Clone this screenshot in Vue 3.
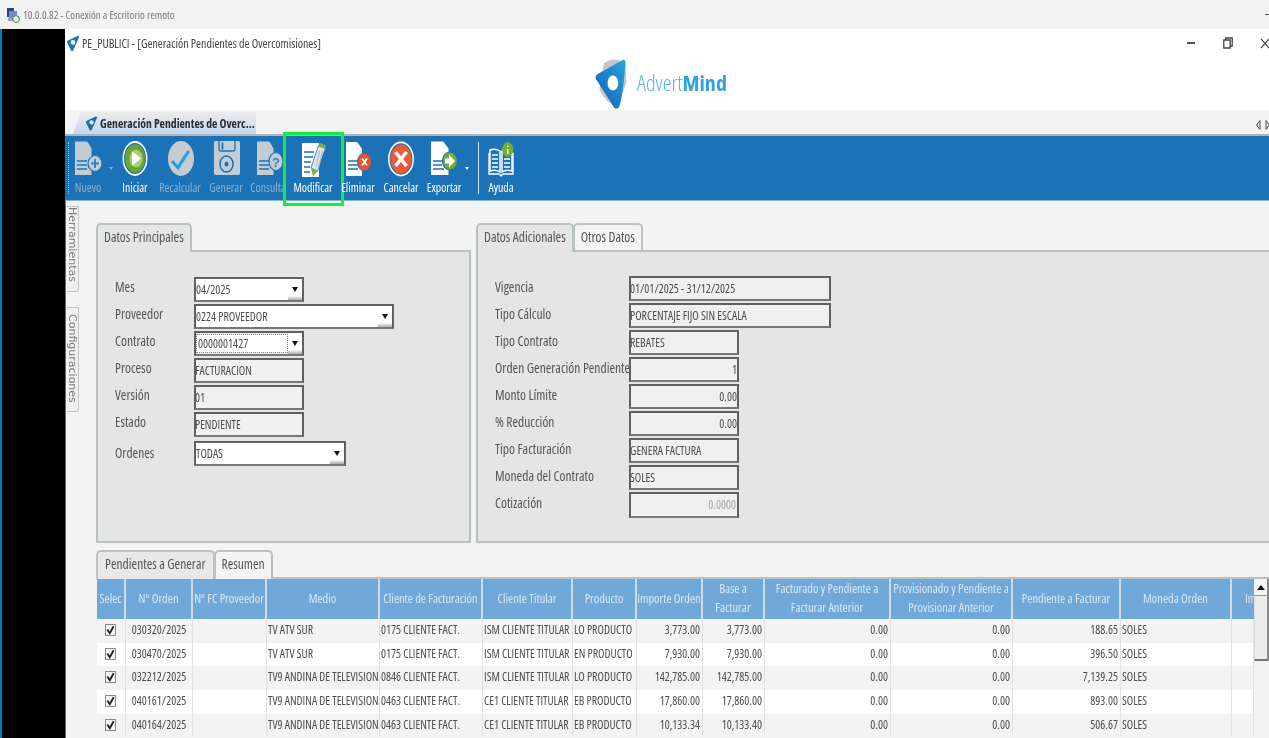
<script setup>
const tools = [
  { id: 'nuevo', label: 'Nuevo', off: true, gap: 0, caret: true },
  { id: 'iniciar', label: 'Iniciar', gap: 7 },
  { id: 'recalcular', label: 'Recalcular', off: true, gap: 5 },
  { id: 'generar', label: 'Generar', off: true, gap: 6 },
  { id: 'consulta', label: 'Consulta', off: true, gap: 2 },
  { id: 'modificar', label: 'Modificar', gap: 5, mark: true },
  { id: 'eliminar', label: 'Eliminar', gap: 5 },
  { id: 'cancelar', label: 'Cancelar', gap: 3 },
  { id: 'exportar', label: 'Exportar', gap: 3, caret: true },
  { id: 'ayuda', label: 'Ayuda', gap: 17, sep: true },
]
const leftRows = [
  { label: 'Mes', value: '04/2025', kind: 'combo', size: 'w110' },
  { label: 'Proveedor', value: '0224 PROVEEDOR', kind: 'combo', size: 'w200' },
  { label: 'Contrato', value: '0000001427', kind: 'combo focus', size: 'w110' },
  { label: 'Proceso', value: 'FACTURACION', kind: 'ro', size: 'w110' },
  { label: 'Versión', value: '01', kind: 'ro', size: 'w110' },
  { label: 'Estado', value: 'PENDIENTE', kind: 'ro', size: 'w110' },
  { label: 'Ordenes', value: 'TODAS', kind: 'combo', size: 'w152 last' },
]
const rightRows = [
  { label: 'Vigencia', value: '01/01/2025 - 31/12/2025', size: 'w202' },
  { label: 'Tipo Cálculo', value: 'PORCENTAJE FIJO SIN ESCALA', size: 'w202' },
  { label: 'Tipo Contrato', value: 'REBATES', size: 'w110' },
  { label: 'Orden Generación Pendiente', value: '1', size: 'w110 num' },
  { label: 'Monto Límite', value: '0.00', size: 'w110 num' },
  { label: '% Reducción', value: '0.00', size: 'w110 num' },
  { label: 'Tipo Facturación', value: 'GENERA FACTURA', size: 'w110' },
  { label: 'Moneda del Contrato', value: 'SOLES', size: 'w110' },
  { label: 'Cotización', value: '0.0000', size: 'w110 num dim' },
]
const heads = [
  ['Selec'], ['Nº Orden'], ['Nº FC Proveedor'], ['Medio'], ['Cliente de Facturación'], ['Cliente Titular'],
  ['Producto'], ['Importe Orden'], ['Base a', 'Facturar'], ['Facturado y Pendiente a', 'Facturar Anterior'],
  ['Provisionado y Pendiente a', 'Provisionar Anterior'], ['Pendiente a Facturar'], ['Moneda Orden'], ['Im'],
]
const rows = [
  ['030320/2025', 'TV ATV SUR', '0175 CLIENTE FACT.', 'ISM CLIENTE TITULAR', 'LO PRODUCTO', '3,773.00', '3,773.00', '188.65'],
  ['030470/2025', 'TV ATV SUR', '0175 CLIENTE FACT.', 'ISM CLIENTE TITULAR', 'EN PRODUCTO', '7,930.00', '7,930.00', '396.50'],
  ['032212/2025', 'TV9 ANDINA DE TELEVISION', '0846 CLIENTE FACT.', 'ISM CLIENTE TITULAR', 'LO PRODUCTO', '142,785.00', '142,785.00', '7,139.25'],
  ['040161/2025', 'TV9 ANDINA DE TELEVISION', '0463 CLIENTE FACT.', 'CE1 CLIENTE TITULAR', 'EB PRODUCTO', '17,860.00', '17,860.00', '893.00'],
  ['040164/2025', 'TV9 ANDINA DE TELEVISION', '0463 CLIENTE FACT.', 'CE1 CLIENTE TITULAR', 'EB PRODUCTO', '10,133.34', '10,133.40', '506.67'],
]
</script>

<template>
  <div class="screen">
    <header class="rdp-bar">
      <svg class="rdp-icon" width="14" height="16" viewBox="0 0 14 16">
        <rect x="1" y="1" width="7" height="9" fill="#27477f" />
        <rect x="3" y="4" width="8" height="7" fill="#6c8fc4" />
        <rect x="2" y="11" width="8" height="3" fill="#9aa3ad" />
        <circle cx="10" cy="12" r="3.4" fill="#e9f3e6" stroke="#4b7f52" />
      </svg>
      <span class="rdp-title">10.0.0.82 - Conexión a Escritorio remoto</span>
      <span class="rdp-min"></span>
    </header>

    <div class="desk">
      <aside class="black"></aside>
      <main class="app">
        <div class="app-head">
          <div class="title-row">
            <svg class="mini-logo" width="14" height="17" viewBox="0 0 14 17">
              <path d="M11.500 1 2 5.500c-1 .5-1.200 1.200-.8 2.100l3.800 8c.5.9 1.400.9 2 .2l5.800-13c.4-1.300 0-2-1.300-1.800Z" fill="#1c74bb" />
              <circle cx="7" cy="7.400" r="2.300" fill="#fff" />
            </svg>
            <span class="app-title">PE_PUBLICI - [Generación Pendientes de Overcomisiones]</span>
            <div class="win-ctrls">
              <span class="ctl-min"></span>
              <svg class="ctl-restore" width="10" height="12" viewBox="0 0 10 12"><path d="M.8 3h6.400v8H.8zM2.600 3V1h6.600v8H7.200" fill="none" stroke="#444" stroke-width="1.300" /></svg>
              <svg class="ctl-close" width="10" height="11" viewBox="0 0 10 11"><path d="m1 .8 8 9.400M9 .8l-8 9.400" fill="none" stroke="#444" stroke-width="1.200" /></svg>
            </div>
          </div>
          <div class="brand">
            <svg width="34" height="50" viewBox="0 0 38 50" preserveAspectRatio="none">
              <defs>
                <linearGradient id="lg" x1="1" y1="0" x2="0" y2="1">
                  <stop offset="0" stop-color="#29a3e2" />
                  <stop offset="1" stop-color="#145fb0" />
                </linearGradient>
              </defs>
              <path d="M10 4a24 24 0 0 1 24 0l1 20-10 24c-9-3-16-9-20-18Z" fill="#c4c6c9" />
              <path d="M31 1 3 15c-2 1-3 3-2 5l20 28c1 2 4 2 6 0 3-6 6-28 7-44 0-3-1-4-3-3Z" fill="url(#lg)" />
              <ellipse cx="20" cy="24" rx="6" ry="7.500" fill="#fff" />
            </svg>
            <span class="brand-text"><span class="thin">Advert</span><b>Mind</b></span>
          </div>
        </div>

        <div class="tab-strip">
          <div class="doc-tab">
            <svg width="13" height="17" viewBox="0 0 14 17">
              <path d="M11.500 1 2 5.500c-1 .5-1.200 1.200-.8 2.100l3.800 8c.5.9 1.400.9 2 .2l5.800-13c.4-1.300 0-2-1.300-1.800Z" fill="#1a6fb0" />
              <circle cx="7" cy="7.400" r="2.300" fill="#dfe9f5" />
            </svg>
            <span>Generación Pendientes de Overc...</span>
          </div>
          <div class="strip-arrows">
            <svg width="16" height="12" viewBox="0 0 16 12"><path d="M5 1.500 1.500 6 5 10.500ZM11 1.500 14.500 6 11 10.500Z" fill="#ddd" stroke="#555" /></svg>
          </div>
        </div>

        <nav class="toolbar">
          <div class="grip"></div>
          <div v-for="t in tools" :key="t.id" class="tool" :class="{ off: t.off }" :style="{ marginLeft: t.gap + 'px' }">
            <i v-if="t.sep" class="sep"></i>
            <svg class="ico" width="40" height="40" viewBox="0 0 40 40">
              <template v-if="t.id === 'nuevo'">
                <path d="M7 1.500h11c1 0 1.500.3 2 1l3.500 6v26.500H7Z" fill="#c3ccd3" />
                <path d="M9 21h10M9 25h10M9 29h10" stroke="#1c72b6" stroke-width="1.500" />
                <ellipse cx="27" cy="23.500" rx="7" ry="8" fill="#c3ccd3" stroke="#1c72b6" stroke-width="1.200" />
                <path d="M27 19v9M23 23.500h8" stroke="#2b86d0" stroke-width="2" />
              </template>
              <template v-else-if="t.id === 'iniciar'">
                <ellipse cx="20" cy="18.500" rx="12.500" ry="17.500" fill="#fff" />
                <ellipse cx="20" cy="18.500" rx="11" ry="15.500" fill="#1c72b6" />
                <ellipse cx="20" cy="18.500" rx="10" ry="14.300" fill="#6ba62f" />
                <ellipse cx="21" cy="18.500" rx="6.500" ry="9" fill="#a6cc79" />
                <path d="M17 11v15l9-7.500Z" fill="#fff" />
              </template>
              <template v-else-if="t.id === 'recalcular'">
                <ellipse cx="21" cy="18.500" rx="13" ry="17.500" fill="#c3ccd3" />
                <path d="m12 21 6 6.700L28.700 11" fill="none" stroke="#2d9ae0" stroke-width="3.200" />
              </template>
              <template v-else-if="t.id === 'generar'">
                <path d="M10 1h22c1.500 0 2 .7 2 2v30c0 1.500-.7 2-2 2H10c-1.500 0-2-.7-2-2V3c0-1.500.7-2 2-2Z" fill="#c3ccd3" />
                <path d="M13 1v8c0 1.500 1 2 2 2h12c1 0 2-.5 2-2V1" fill="none" stroke="#1c72b6" stroke-width="1.300" />
                <path d="M16.500 2.500v7" stroke="#1c72b6" stroke-width="1.800" />
                <ellipse cx="20.500" cy="24" rx="6.500" ry="8" fill="none" stroke="#1c72b6" stroke-width="1.500" />
                <ellipse cx="20.500" cy="24" rx="2" ry="2.500" fill="#1c72b6" />
              </template>
              <template v-else-if="t.id === 'consulta'">
                <path d="M9 1.500h11c1 0 1.500.3 2 1l3.500 6v26.500H9Z" fill="#c3ccd3" />
                <path d="M11 21h10M11 25h10M11 29h10" stroke="#1c72b6" stroke-width="1.500" />
                <ellipse cx="28" cy="21.500" rx="7" ry="9" fill="#c3ccd3" stroke="#1c72b6" stroke-width="1.200" />
                <text x="28" y="26.500" text-anchor="middle" class="q">?</text>
              </template>
              <template v-else-if="t.id === 'modificar'">
                <path d="M9 3h17v34H9Z" fill="#fff" />
                <path d="M11 12h10M11 17h9M11 22h7M11 27h6M11 32h6" stroke="#1c72b6" stroke-width="1.300" />
                <path d="M25.500 5.500 32.500 8 24.500 31 18 28Z" fill="#dfe6ea" stroke="#1c72b6" stroke-width=".8" />
                <path d="M27 10 23 27M29.500 11 25.500 28" stroke="#a9b6bf" stroke-width="1" />
                <path d="M27 3 33 5.500 32 9 25.500 6.500Z" fill="#7fb144" />
                <path d="m18 28 6.500 3-4.500 5.500Z" fill="#7fb144" />
              </template>
              <template v-else-if="t.id === 'eliminar'">
                <path d="M8 2h10c1 0 1.500.3 2 1l4 6v27H8Z" fill="#fff" />
                <path d="M10 21h10M10 25h10M10 29h10" stroke="#1c72b6" stroke-width="1.500" />
                <ellipse cx="26.500" cy="22" rx="7" ry="9" fill="#e8502e" stroke="#1c72b6" stroke-width="1" />
                <path d="m24 18.500 5 7M29 18.500l-5 7" stroke="#fff" stroke-width="2" />
              </template>
              <template v-else-if="t.id === 'cancelar'">
                <ellipse cx="20" cy="19" rx="13" ry="17.500" fill="#fff" />
                <ellipse cx="20" cy="19" rx="11.500" ry="15.700" fill="#1c72b6" />
                <ellipse cx="20" cy="19" rx="10.500" ry="14.500" fill="#ee5b32" />
                <path d="m14.500 12 11 14M25.500 12l-11 14" stroke="#fff" stroke-width="3.500" />
              </template>
              <template v-else-if="t.id === 'exportar'">
                <path d="M7 1.500h11c1 0 1.500.3 2 1l4.500 6v26.500H7Z" fill="#fff" />
                <path d="M9 21h9M9 25h9M9 29h11" stroke="#1c72b6" stroke-width="1.500" />
                <ellipse cx="26" cy="21" rx="7.500" ry="9" fill="#74ac38" stroke="#1c72b6" stroke-width="1.200" />
                <path d="M21 18.500h4v-4l6 6.500-6 6.500v-4h-4Z" fill="#fff" />
              </template>
              <template v-else>
                <path d="M9 10c3-1 7-1 10 1v21c-3-2-7-2-10-1Z" fill="#1c72b6" stroke="#fff" stroke-width="1.500" />
                <path d="M31 10c-3-1-7-1-10 1v21c3-2 7-2 10-1Z" fill="#1c72b6" stroke="#fff" stroke-width="1.500" />
                <path d="M11 15h6M11 19h6M11 23h6M11 27h6M23 19h6M23 23h6M23 27h6" stroke="#fff" stroke-width="1.500" />
                <path d="M8 13v21h10l2 2 2-2h10V13" fill="none" stroke="#fff" stroke-width="1.300" />
                <ellipse cx="26.700" cy="9.500" rx="5.500" ry="7.500" fill="#74ac38" />
                <path d="M26.700 5.500v1.500M26.700 9v5" stroke="#fff" stroke-width="1.500" />
              </template>
            </svg>
            <span class="tool-label">{{ t.label }}</span>
            <i v-if="t.caret" class="caret"></i>
            <i v-if="t.mark" class="mark"></i>
          </div>
        </nav>

        <div class="work">
          <div class="side-tabs">
            <div class="side-tab herr">Herramientas</div>
            <div class="side-tab conf">Configuraciones</div>
          </div>
          <div class="content">
            <div class="panels">
              <section class="group left">
                <div class="tabs">
                  <div class="tab active first">Datos Principales</div>
                </div>
                <div class="panel-body form-left">
                  <div v-for="r in leftRows" :key="r.label" class="row" :class="r.size">
                    <label class="lbl">{{ r.label }}</label>
                    <div class="field" :class="[r.kind, r.size]">
                      <span class="val">{{ r.value }}</span>
                      <span v-if="r.kind.includes('combo')" class="drop"><i></i></span>
                    </div>
                  </div>
                </div>
              </section>
              <section class="group right">
                <div class="tabs">
                  <div class="tab active first">Datos Adicionales</div>
                  <div class="tab">Otros Datos</div>
                </div>
                <div class="panel-body form-right">
                  <div v-for="r in rightRows" :key="r.label" class="row">
                    <label class="lbl">{{ r.label }}</label>
                    <div class="field ro" :class="r.size"><span class="val">{{ r.value }}</span></div>
                  </div>
                </div>
              </section>
            </div>

            <section class="bottom">
              <div class="tabs">
                <div class="tab active first plain">Pendientes a Generar</div>
                <div class="tab">Resumen</div>
              </div>
              <div class="grid-wrap">
                <div class="grid-table">
                  <div class="g-row g-head">
                    <div v-for="h in heads" :key="h[0]" class="g-cell"><span v-for="l in h" :key="l">{{ l }}</span></div>
                  </div>
                  <div v-for="(r, i) in rows" :key="r[0]" class="g-row g-data" :class="{ alt: i % 2 === 0 }">
                    <div class="g-cell chk"><svg width="11" height="12" viewBox="0 0 11 12"><rect x=".5" y=".5" width="10" height="11" fill="#f4f4f4" stroke="#8a8a8a" /><path d="m2.300 5.500 2.500 3.800 3.800-7" fill="none" stroke="#222" stroke-width="1.800" /></svg></div>
                    <div class="g-cell center">{{ r[0] }}</div>
                    <div class="g-cell"></div>
                    <div class="g-cell">{{ r[1] }}</div>
                    <div class="g-cell">{{ r[2] }}</div>
                    <div class="g-cell">{{ r[3] }}</div>
                    <div class="g-cell">{{ r[4] }}</div>
                    <div class="g-cell num">{{ r[5] }}</div>
                    <div class="g-cell num">{{ r[6] }}</div>
                    <div class="g-cell num">0.00</div>
                    <div class="g-cell num">0.00</div>
                    <div class="g-cell num">{{ r[7] }}</div>
                    <div class="g-cell">SOLES</div>
                    <div class="g-cell"></div>
                  </div>
                </div>
                <div class="scroll">
                  <div class="sc-btn"><i></i></div>
                  <div class="sc-thumb"></div>
                </div>
              </div>
            </section>
          </div>
        </div>
      </main>
    </div>
  </div>
</template>

<style>
html, body { margin: 0; overflow: hidden; background: #f3f3f3; }
</style>

<style scoped>
.screen {
  width: 1269px; height: 738px; overflow: hidden; display: flex; flex-direction: column;
  background: #f3f3f3; color: #555;
  font-family: "Open Sans", "Liberation Sans", sans-serif;
  font-stretch: condensed;
  filter: blur(.35px);
}
.rdp-bar { height: 29px; flex: none; display: flex; align-items: center; padding-left: 6px; background: #f2f2f2; position: relative; }
.rdp-icon { margin-right: 3px; }
.rdp-title { font-size: 11px; color: #7a7a7a; }
.rdp-min { position: absolute; right: -4px; top: 14px; width: 8px; height: 1px; background: #555; }
.desk { flex: 1; display: flex; min-height: 0; }
.black { width: 63px; flex: none; background: #000; border-left: 2px solid #0a7ea8; }
.app { flex: 1; min-width: 0; display: flex; flex-direction: column; }
.app-head { height: 81px; flex: none; background: #fff; position: relative; }
.title-row { display: flex; align-items: center; height: 28px; padding-left: 1px; }
.mini-logo { margin-right: 2px; margin-top: 1px; }
.app-title { font-size: 12px; color: #444; }
.win-ctrls { margin-left: auto; display: flex; align-items: center; }
.ctl-min { width: 8px; height: 2px; background: #555; margin-right: 28px; }
.ctl-restore { margin-right: 27px; }
.ctl-close { margin-right: -1px; }
.brand { display: flex; align-items: center; justify-content: center; height: 53px; gap: 8px; margin-left: -12px; }
.brand-text { font: 300 22px "Open Sans", sans-serif; font-stretch: condensed; color: #5bb5e8; position: relative; top: -2px; }
.brand-text b { font-weight: 700; color: #2ea3e0; }
.tab-strip { flex: none; display: flex; align-items: flex-end; background: #f3f3f3; position: relative; padding-left: 8px; border-bottom: 2px solid #b3b3b3; box-sizing: border-box; height: 26px; }
.doc-tab {
  width: 183px; height: 22px; display: flex; align-items: center; gap: 2px; padding-left: 12px; box-sizing: border-box; white-space: nowrap;
  background: linear-gradient(#ececec, #c3d6f2); font-size: 11.700px; font-weight: 700; color: #2c2c2c;
  clip-path: polygon(8px 0, 100% 0, 100% 100%, 0 100%);
}
.doc-tab svg { flex: none; }
.strip-arrows { position: absolute; right: -2px; top: 4px; }
.toolbar { height: 64px; flex: none; display: flex; background: #1c72b6; border-bottom: 1px solid #7db6dd; padding-left: 3px; position: relative; }
.grip { position: absolute; left: 3px; top: 6px; bottom: 6px; border-left: 1px dotted #8fbde0; }
.tool { width: 40px; flex: none; display: flex; flex-direction: column; align-items: center; position: relative; color: #fff; padding-top: 4px; }
.tool.off { color: #8db1cf; }
.ico { flex: none; display: block; }
.q { font: 700 13px "Liberation Sans", sans-serif; fill: #2b86d0; }
.tool-label { font-size: 11.800px; white-space: nowrap; line-height: 14px; }
.caret { position: absolute; right: -5px; top: 31px; border: 2.500px solid transparent; border-top: 3px solid currentColor; }
.sep { position: absolute; left: -3px; top: 6px; height: 52px; width: 1px; background: #cfe2f0; }
.mark { position: absolute; left: -10px; top: -4px; width: 61px; height: 74px; box-sizing: border-box; border: 3px solid #14ee3c; }
.work { flex: 1; display: flex; min-height: 0; }
.side-tabs { width: 31px; flex: none; padding: 5px 0 0 1px; box-sizing: border-box; background: #f3f3f3; border-left: 1px solid #667; }
.side-tab { width: 12px; writing-mode: vertical-rl; font: 11px/12px "DejaVu Sans", sans-serif; font-stretch: normal; color: #7c7c7c; background: #f0f0f0; border: 1px solid #c3c3c3; border-left: 0; border-radius: 0 0 3px 0; box-sizing: border-box; white-space: nowrap; overflow: hidden; }
.herr { height: 86px; margin-bottom: 15px; }
.conf { height: 105px; padding-top: 6px; }
.content { flex: 1; min-width: 0; padding-top: 22px; }
.panels { display: flex; gap: 5px; height: 320px; }
.group { display: flex; flex-direction: column; }
.group.left { width: 375px; flex: none; }
.group.right { flex: 1; min-width: 0; }
.tabs { display: flex; height: 27px; flex: none; position: relative; z-index: 1; }
.tab { font-size: 13.500px; color: #555; padding: 0 6px 2px; border: 2px solid #b9c1c1; border-bottom: 0; border-radius: 5px 5px 0 0; background: #f4f4f4; display: flex; align-items: center; box-sizing: border-box; height: 27px; margin-left: -1px; white-space: nowrap; }
.tab.first { margin-left: 0; padding: 0 6px 4px; }
.tab.active { background: #e5e5e5; height: 29px; }
.tab.plain { background: #e8e8e8; padding-left: 7px; padding-right: 7px; }
.panel-body { flex: 1; background: #e5e5e5; border: 2px solid #b9c1c1; box-sizing: border-box; min-height: 0; }
.group.right .panel-body { border-right: 0; }
.form-left { padding: 25px 0 0 17px; }
.form-right { padding: 24px 0 0 17px; }
.row { display: flex; align-items: flex-start; height: 27px; }
.row.last { margin-top: 2px; }
.row.last .lbl { margin-top: 2px; }
.form-left .lbl { width: 79px; flex: none; }
.form-right .lbl { width: 134px; flex: none; white-space: nowrap; padding-top: 1px; }
.form-right .row:last-child .field { height: 26px; }
.lbl { font-size: 13.500px; color: #555; line-height: 20px; }
.field { height: 25px; box-sizing: border-box; border: 2px solid #606060; display: flex; align-items: center; position: relative; background: #f0f0f0; border-bottom-color: #777; }
.field.w110 { width: 110px; }
.field.w200 { width: 200px; }
.field.w152 { width: 152px; }
.field.w202 { width: 202px; }
.field.combo { background: #fff; }
.val { font-size: 11.800px; color: #4e4e4e; white-space: nowrap; flex: 1; min-width: 0; padding-bottom: 2px; margin-left: -1px; }
.combo .val { padding-left: 1px; }
.field.num .val { text-align: right; margin-left: 0; }
.field.dim .val { color: #a5a5a5; padding-right: 1px; }
.drop { width: 14px; height: 100%; flex: none; background: linear-gradient(#fff 80%, #aaa); display: flex; align-items: center; justify-content: center; }
.focus { background: #eee !important; }
.focus .val { background: #fff; outline: 1px dotted #888; height: 17px; line-height: 17px; margin: 0 1px; padding-bottom: 0; }
.drop i { border: 3.500px solid transparent; border-top: 5px solid #111; border-bottom: 0; }
.bottom { margin-top: 7px; }
.bottom .tabs { height: 29px; }
.bottom .tab { height: 29px; padding-bottom: 4px; }
.grid-wrap { display: flex; border-top: 2px solid #b9c1c1; margin-top: -2px; padding-left: 1px; position: relative; height: 162px; overflow: hidden; }
.grid-table { width: 1157px; flex: none; overflow: hidden; }
.g-row { display: grid; grid-template-columns: 29px 67px 74px 113px 103px 90px 64px 66px 62px 126px 122px 108px 111px 22px; }
.g-head { height: 40px; }
.g-head .g-cell { background: #70a8da; color: #d9e8f5; font-size: 12.400px; border-right: 2px solid #d0dbe4; display: flex; flex-direction: column; align-items: center; justify-content: center; line-height: 19px; white-space: nowrap; overflow: hidden; box-sizing: border-box; padding-bottom: 2px; }
.g-head .g-cell:last-child { align-items: flex-start; padding-left: 13px; border-right: 0; }
.g-data { height: 23.700px; background: #fff; }
.g-data.alt { background: #f3f3f3; }
.g-data .g-cell { font-size: 11.800px; color: #4e4e4e; line-height: 21px; border-right: 1px solid #e2e2e2; padding: 0 1px; white-space: nowrap; overflow: hidden; box-sizing: border-box; }
.g-data .num { text-align: right; padding-right: 2px; }
.g-data .center { text-align: center; }
.g-data .chk { display: flex; align-items: center; justify-content: center; padding: 0 4px 2px 3px; }
.scroll { width: 15px; flex: none; background: #f3f3f3; }
.sc-btn { height: 17px; box-sizing: border-box; background: #f4f4f4; border-bottom: 1px solid #999; border-right: 2px solid #888; display: flex; align-items: center; justify-content: center; }
.sc-btn i { border: 4px solid transparent; border-bottom: 5px solid #111; border-top: 0; }
.sc-thumb { height: 65px; box-sizing: border-box; background: #ececec; border-bottom: 2px solid #777; border-left: 1px solid #ddd; border-right: 2px solid #888; }
</style>
